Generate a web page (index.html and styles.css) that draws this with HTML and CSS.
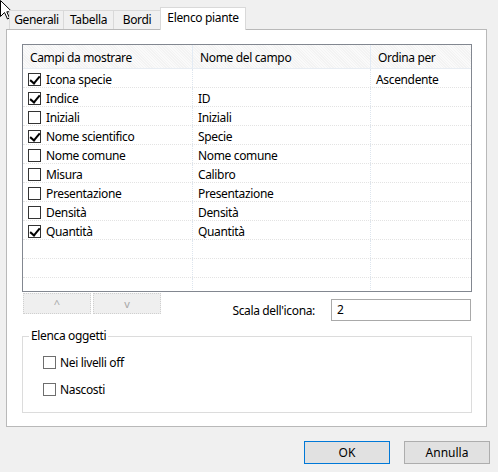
FILE: index.html
```html
<!DOCTYPE html>
<html lang="it">
<head>
<meta charset="utf-8">
<link rel="stylesheet" href="styles.css">
</head>
<body>
<div class="dialog">
  <div class="tabs">
    <div class="tab t1">Generali</div>
    <div class="tab t2">Tabella</div>
    <div class="tab t3">Bordi</div>
    <div class="tab active">Elenco piante</div>
  </div>
  <div class="panel">
    <div class="grid">
      <div class="row head">
        <div class="cell">Campi da mostrare</div>
        <div class="cell">Nome del campo</div>
        <div class="cell">Ordina per</div>
      </div>
      <div class="row"><div class="cell"><span class="cb on"></span>Icona specie</div><div class="cell"></div><div class="cell">Ascendente</div></div>
      <div class="row"><div class="cell"><span class="cb on"></span>Indice</div><div class="cell">ID</div><div class="cell"></div></div>
      <div class="row"><div class="cell"><span class="cb"></span>Iniziali</div><div class="cell">Iniziali</div><div class="cell"></div></div>
      <div class="row"><div class="cell"><span class="cb on"></span>Nome scientifico</div><div class="cell">Specie</div><div class="cell"></div></div>
      <div class="row"><div class="cell"><span class="cb"></span>Nome comune</div><div class="cell">Nome comune</div><div class="cell"></div></div>
      <div class="row"><div class="cell"><span class="cb"></span>Misura</div><div class="cell">Calibro</div><div class="cell"></div></div>
      <div class="row"><div class="cell"><span class="cb"></span>Presentazione</div><div class="cell">Presentazione</div><div class="cell"></div></div>
      <div class="row"><div class="cell"><span class="cb"></span>Densità</div><div class="cell">Densità</div><div class="cell"></div></div>
      <div class="row"><div class="cell"><span class="cb on"></span>Quantità</div><div class="cell">Quantità</div><div class="cell"></div></div>
      <div class="row"><div class="cell"></div><div class="cell"></div><div class="cell"></div></div>
      <div class="row"><div class="cell"></div><div class="cell"></div><div class="cell"></div></div>
      <div class="row"><div class="cell"></div><div class="cell"></div><div class="cell"></div></div>
    </div>
    <div class="under">
      <button class="move" disabled>^</button>
      <button class="move" disabled>v</button>
      <div class="scale">
        <span class="scale-label">Scala dell'icona:</span>
        <div class="input">2</div>
      </div>
    </div>
    <fieldset class="group">
      <legend>Elenca oggetti</legend>
      <label class="opt"><span class="cb gray"></span>Nei livelli off</label>
      <label class="opt"><span class="cb gray"></span>Nascosti</label>
    </fieldset>
  </div>
  <div class="footer">
    <button class="btn default">OK</button>
    <button class="btn">Annulla</button>
  </div>
</div>
<svg class="cursor" width="13" height="20" viewBox="0 0 13 20"><path d="M0.5 0.5 L0.5 16.5 L4.5 12.5 L7.5 19 L9.5 18 L6.8 11.8 L12 11.8 Z" fill="#fff" stroke="#000" stroke-width="1"/></svg>
</body>
</html>
```
FILE: styles.css
```css
* { box-sizing: border-box; }
html, body { margin: 0; padding: 0; }
body {
  width: 498px;
  height: 472px;
  background: #f0f0f0;
  font-family: "Noto Sans", "Open Sans", sans-serif;
  font-size: 12px;
  letter-spacing: -0.35px;
  color: #000;
  overflow: hidden;
  position: relative;
}
.dialog { padding: 7px 0 0 6px; }
.tabs {
  display: flex;
  align-items: flex-end;
  height: 23px;
  padding-left: 3px;
  margin-bottom: -1px;
  position: relative;
  z-index: 1;
}
.tab {
  height: 19px;
  border: 1px solid #d9d9d9;
  border-bottom: none;
  background: #f0f0f0;
  line-height: 18px;
  text-align: center;
  margin-right: -1px;
  margin-bottom: 1px;
}
.t1 { width: 55px; }
.t2 { width: 51px; }
.t3 { width: 48px; }
.active {
  width: 86px;
  height: 23px;
  background: #fff;
  margin-bottom: 0;
  line-height: 19px;
  padding-bottom: 2px;
}
.panel {
  width: 481px;
  height: 398px;
  background: #fff;
  border: 1px solid #b9b9b9;
  padding: 14px 15px 0 15px;
}
.grid {
  width: 450px;
  height: 248px;
  border: 1px solid #828790;
  overflow: hidden;
}
.row {
  display: grid;
  grid-template-columns: 170px 178px 1fr;
  height: 19px;
  border-bottom: 1px dotted #e3e3e3;
}
.row.head {
  height: 24px;
  background: repeating-linear-gradient(45deg, #fafafa 0 1px, #f3f3f3 1px 2px);
  border-bottom: 1px solid #e8edf3;
}
.cell {
  display: flex;
  align-items: center;
  padding: 3px 0 0 5px;
  border-right: 1px dotted #dde5ee;
  white-space: nowrap;
  overflow: hidden;
}
.head .cell { padding: 2px 0 0 7px; border-right: 1px solid #e3ebf4; }
.cell:last-child { border-right: none; }
.cb {
  flex: none;
  width: 13px;
  height: 13px;
  border: 1px solid #333;
  background: #fff;
  margin-right: 5px;
  position: relative;
}
.row .cb { margin-top: -1px; }
.cb.on::after {
  content: "";
  position: absolute;
  left: 3px;
  top: 0px;
  width: 4px;
  height: 8px;
  border: solid #000;
  border-width: 0 2px 2px 0;
  transform: rotate(40deg);
}
.cb.gray { border-color: #6e6e6e; }
.under {
  display: flex;
  align-items: flex-start;
  margin-top: 1px;
}
.move {
  width: 68px;
  height: 21px;
  margin: 0 2px 0 1px;
  padding: 0;
  background: #efefef;
  border: 1px dotted #cfcfcf;
  color: #a8a8a8;
  font-family: inherit;
  font-size: 11px;
}
.move + .move { margin-left: 0; }
.scale {
  margin-left: auto;
  margin-top: 6px;
  display: flex;
  align-items: center;
}
.scale-label { margin-right: 16px; }
.input {
  width: 140px;
  height: 22px;
  border: 1px solid #a9a9a9;
  padding: 1px 0 0 5px;
  line-height: 18px;
}
.group {
  margin: 7px 0 0;
  padding: 5px 0 0 20px;
  width: 450px;
  height: 85px;
  border: 1px solid #dcdcdc;
}
.group legend {
  padding: 0 2px;
  margin-left: -14px;
  line-height: 16px;
}
.opt {
  display: flex;
  align-items: center;
  height: 27px;
}
.opt .cb { margin-right: 4px; }
.footer {
  display: flex;
  justify-content: flex-end;
  gap: 14px;
  padding: 14px 8px 0 0;
}
.btn {
  width: 86px;
  height: 23px;
  background: #e1e1e1;
  border: 1px solid #adadad;
  font-family: inherit;
  font-size: 12px;
  padding: 0;
  color: #000;
}
.btn.default { border-color: #0078d7; }
.cursor {
  position: absolute;
  left: 0;
  top: 0;
}
```
